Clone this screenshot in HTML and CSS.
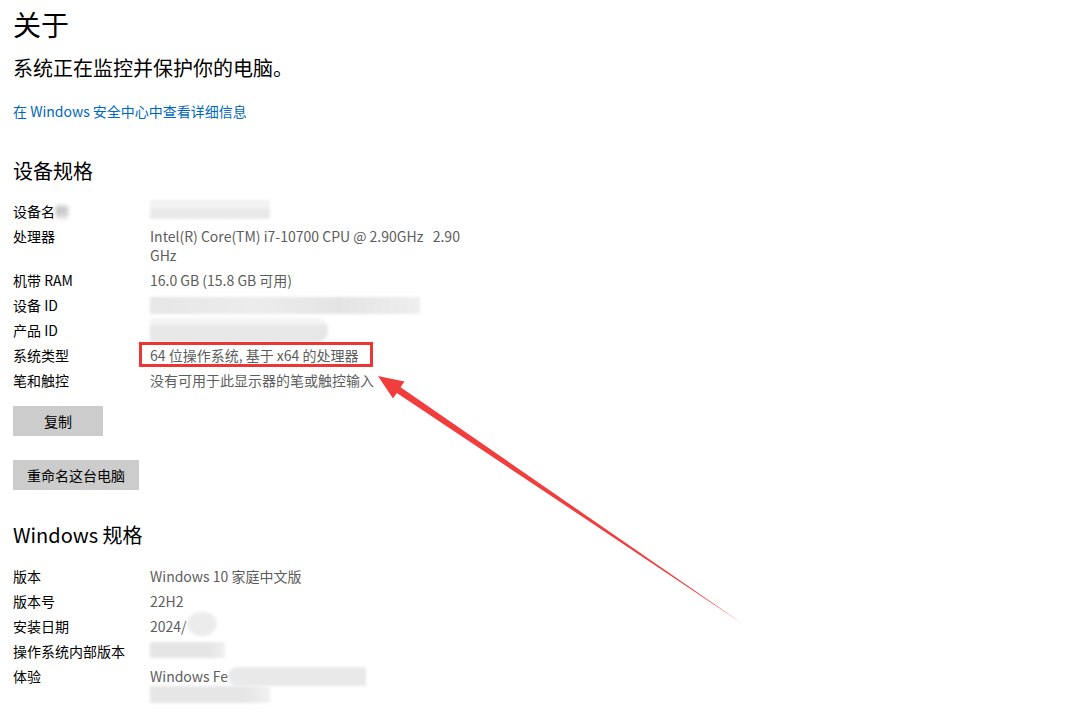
FILE: index.html
```html
<!DOCTYPE html>
<html lang="zh-CN">
<head>
  <meta charset="UTF-8">
  <meta name="viewport" content="width=device-width, initial-scale=1.0">
  <title>关于</title>
  <link rel="stylesheet" href="styles.css">
</head>
<body>
  <div class="page">
    <h1>关于</h1>
    <p class="status">系统正在监控并保护你的电脑。</p>
    <a class="link" href="#">在 Windows 安全中心中查看详细信息</a>

    <h2>设备规格</h2>
    <div class="specs">
      <div class="label">设备名<span class="smudge-label">称</span></div>
      <div class="value"><span class="blur blur-name"></span></div>

      <div class="label">处理器</div>
      <div class="value">Intel(R) Core(TM) i7-10700 CPU @ 2.90GHz&nbsp;&nbsp;&nbsp;2.90 GHz</div>

      <div class="label">机带 RAM</div>
      <div class="value">16.0 GB (15.8 GB 可用)</div>

      <div class="label">设备 ID</div>
      <div class="value"><span class="blur blur-devid"></span></div>

      <div class="label">产品 ID</div>
      <div class="value"><span class="blur blur-prodid"></span></div>

      <div class="label">系统类型</div>
      <div class="value"><span class="marked">64 位操作系统, 基于 x64 的处理器</span></div>

      <div class="label">笔和触控</div>
      <div class="value">没有可用于此显示器的笔或触控输入</div>
    </div>

    <button class="btn">复制</button>
    <button class="btn">重命名这台电脑</button>

    <h2 class="win">Windows 规格</h2>
    <div class="specs">
      <div class="label">版本</div>
      <div class="value">Windows 10 家庭中文版</div>

      <div class="label">版本号</div>
      <div class="value">22H2</div>

      <div class="label">安装日期</div>
      <div class="value">2024/<span class="blur blur-date"></span></div>

      <div class="label">操作系统内部版本</div>
      <div class="value"><span class="blur blur-build"></span></div>

      <div class="label">体验</div>
      <div class="value">Windows Fe<span class="blur blur-exp"></span><br><span class="blur blur-exp2"></span></div>
    </div>
  </div>

  <!-- annotation arrow drawn over the page -->
  <svg class="arrow" width="1080" height="720" viewBox="0 0 1080 720">
    <polygon points="378,376 404.5,381.5 400.6,387.2 743,624 396.8,392.9 393,398.5" fill="#f23d3d"/>
  </svg>
</body>
</html>
```

FILE: styles.css
```css
body {
  margin: 0;
  background: #fff;
  font-family: "Noto Sans CJK SC", "Noto Sans", sans-serif;
  color: #000;
}
.page {
  padding: 4px 13px 0;
}
h1 {
  margin: 0;
  font-size: 28px;
  font-weight: 400;
  line-height: 40px;
}
.status {
  margin: 10px 0 0;
  font-size: 20px;
  line-height: 28px;
}
.link {
  display: inline-block;
  margin-top: 19px;
  font-size: 14px;
  line-height: 20px;
  color: #0067c0;
  text-decoration: none;
}
h2 {
  margin: 35px 0 0;
  font-size: 20px;
  font-weight: 400;
  line-height: 28px;
}
h2.win {
  margin-top: 31px;
}
.specs {
  display: grid;
  grid-template-columns: 137px 325px;
  row-gap: 6px;
  margin-top: 17px;
  font-size: 14px;
  line-height: 19px;
}
.win + .specs {
  margin-top: 18px;
}
.label {
  color: #000;
}
.value {
  color: #5d5d5d;
}
.smudge-label {
  filter: blur(2px);
  opacity: .5;
}
.marked {
  position: relative;
}
.marked::after {
  content: "";
  position: absolute;
  top: -3px;
  bottom: -2px;
  left: -11px;
  right: -14px;
  border: 3px solid #ec3535;
}
.blur {
  display: inline-block;
  vertical-align: top;
  height: 19px;
  filter: blur(1.5px);
}
.blur-name {
  width: 120px;
  margin-top: -2px;
  background: linear-gradient(to bottom, #f2f2f2 45%, #e9e9e9 45%);
}
.blur-devid {
  width: 270px;
  height: 17px;
  margin-top: 1px;
  background: linear-gradient(to right, #e6e6e6, #ececec 40%, #e4e4e4 70%, #eeeeee);
}
.blur-prodid {
  width: 178px;
  height: 24px;
  margin: -3px 0 -2px;
  border-radius: 0 10px 10px 0;
  background: linear-gradient(to bottom, #f4f4f4 30%, #e7e7e7 30%);
}
.blur-date {
  width: 30px;
  height: 24px;
  margin: -5px 0 0;
  border-radius: 50%;
  background: #ececec;
}
.blur-build {
  width: 75px;
  height: 16px;
  background: linear-gradient(to right, #e5e5e5 80%, #f0f0f0);
}
.blur-exp {
  width: 138px;
  border-radius: 10px 0 0 10px;
  background: #e9e9e9;
}
.blur-exp2 {
  width: 120px;
  height: 17px;
  background: linear-gradient(to right, #e6e6e6 80%, #f2f2f2);
}
.btn {
  display: block;
  margin-top: 16px;
  padding: 0 14px;
  height: 30px;
  min-width: 90px;
  border: 0;
  background: #cccccc;
  font-family: inherit;
  font-size: 14px;
  color: #000;
}
.btn + .btn {
  margin-top: 24px;
}
.arrow {
  position: absolute;
  left: 0;
  top: 0;
  pointer-events: none;
}
```
